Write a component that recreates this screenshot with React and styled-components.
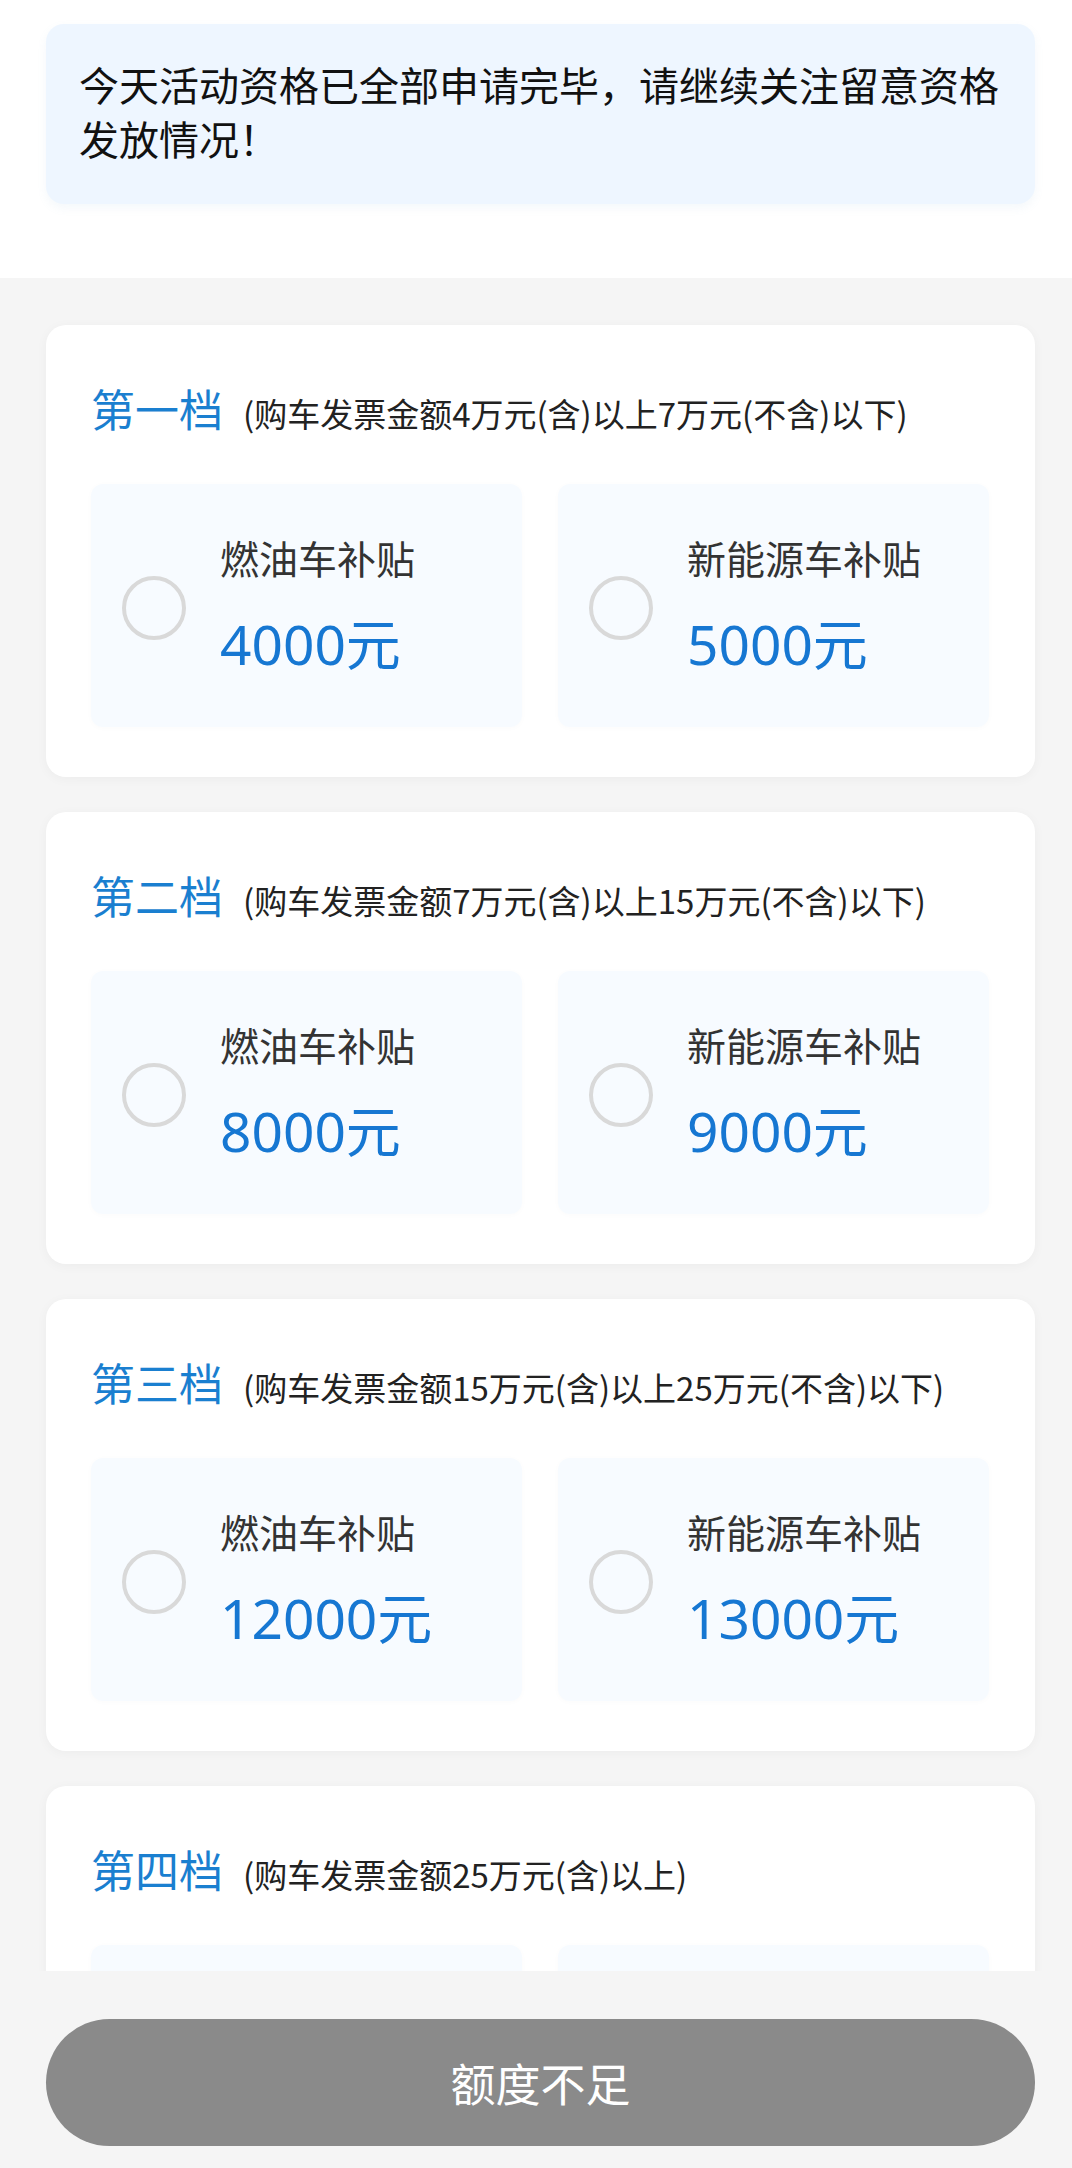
import React from "react";
import styled, { createGlobalStyle } from "styled-components";

const GlobalStyle = createGlobalStyle`
  body {
    margin: 0;
    font-family: "Noto Sans CJK SC", "Noto Sans", sans-serif;
    background: #f5f5f5;
  }
`;

const tiers = [
  {
    name: "第一档",
    range: "(购车发票金额4万元(含)以上7万元(不含)以下)",
    fuel: 4000,
    ev: 5000,
  },
  {
    name: "第二档",
    range: "(购车发票金额7万元(含)以上15万元(不含)以下)",
    fuel: 8000,
    ev: 9000,
  },
  {
    name: "第三档",
    range: "(购车发票金额15万元(含)以上25万元(不含)以下)",
    fuel: 12000,
    ev: 13000,
  },
  {
    name: "第四档",
    range: "(购车发票金额25万元(含)以上)",
    fuel: 15000,
    ev: 16000,
  },
];

const App = () => {
  return (
    <Page>
      <GlobalStyle />
      <TopBar>
        <Notice>今天活动资格已全部申请完毕，请继续关注留意资格发放情况！</Notice>
      </TopBar>
      <List>
        {tiers.map((t) => (
          <Card key={t.name}>
            <TitleRow>
              <TierName>{t.name}</TierName>
              <TierRange>{t.range}</TierRange>
            </TitleRow>
            <Options>
              <Option>
                <Radio />
                <OptionText>
                  <OptionLabel>燃油车补贴</OptionLabel>
                  <Amount>{t.fuel}元</Amount>
                </OptionText>
              </Option>
              <Option>
                <Radio />
                <OptionText>
                  <OptionLabel>新能源车补贴</OptionLabel>
                  <Amount>{t.ev}元</Amount>
                </OptionText>
              </Option>
            </Options>
          </Card>
        ))}
      </List>
      <Footer>
        <SubmitButton disabled>额度不足</SubmitButton>
      </Footer>
    </Page>
  );
};

export default App;

const Page = styled.div`
  width: 1072px;
  height: 2168px;
  display: flex;
  flex-direction: column;
  background: #f5f5f5;
  overflow: hidden;
`;

const TopBar = styled.div`
  background: #fff;
  padding: 24px 37px 74px 46px;
  flex-shrink: 0;
`;

const Notice = styled.div`
  background: #eef6ff;
  border-radius: 18px;
  padding: 33px 33px 39px 33px;
  font-size: 40px;
  line-height: 54px;
  color: #111;
  box-shadow: 0 4px 10px rgba(120, 160, 210, 0.08);
`;

const List = styled.div`
  flex: 1;
  min-height: 0;
  overflow: hidden;
  padding: 47px 37px 0 46px;
  display: flex;
  flex-direction: column;
  gap: 35px;
`;

const Card = styled.div`
  flex-shrink: 0;
  background: #fff;
  border-radius: 20px;
  padding: 53px 46px 50px 45px;
  box-shadow: 0 2px 12px rgba(0, 0, 0, 0.04);
`;

const TitleRow = styled.div`
  display: flex;
  align-items: baseline;
  gap: 20px;
  height: 60px;
  line-height: 60px;
`;

const TierName = styled.span`
  font-size: 44px;
  color: #1a7fd0;
`;

const TierRange = styled.span`
  font-size: 33px;
  color: #222;
`;

const Options = styled.div`
  margin-top: 46px;
  display: grid;
  grid-template-columns: 1fr 1fr;
  gap: 36px;
`;

const Option = styled.div`
  height: 243px;
  background: #f7fbff;
  border-radius: 12px;
  display: flex;
  align-items: center;
  padding-left: 31px;
  gap: 34px;
  box-shadow: 0 1px 6px rgba(0, 0, 0, 0.02);
`;

const Radio = styled.div`
  width: 56px;
  height: 56px;
  border-radius: 50%;
  border: 4px solid #d9d9d9;
  flex-shrink: 0;
  margin-top: 4px;
`;

const OptionText = styled.div`
  display: flex;
  flex-direction: column;
  gap: 27px;
`;

const OptionLabel = styled.div`
  font-size: 39px;
  line-height: 50px;
  color: #333;
`;

const Amount = styled.div`
  font-family: "Noto Sans", "Noto Sans CJK SC", sans-serif;
  font-size: 55px;
  line-height: 70px;
  color: #1677d2;
`;

const Footer = styled.div`
  flex-shrink: 0;
  height: 197px;
  box-sizing: border-box;
  padding: 48px 37px 22px 46px;
  background: #f5f5f5;
`;

const SubmitButton = styled.button`
  width: 100%;
  height: 127px;
  border: none;
  border-radius: 64px;
  background: #8a8a8a;
  color: #fff;
  font-family: "Noto Sans CJK SC", sans-serif;
  font-size: 45px;
  display: flex;
  align-items: center;
  justify-content: center;
`;
